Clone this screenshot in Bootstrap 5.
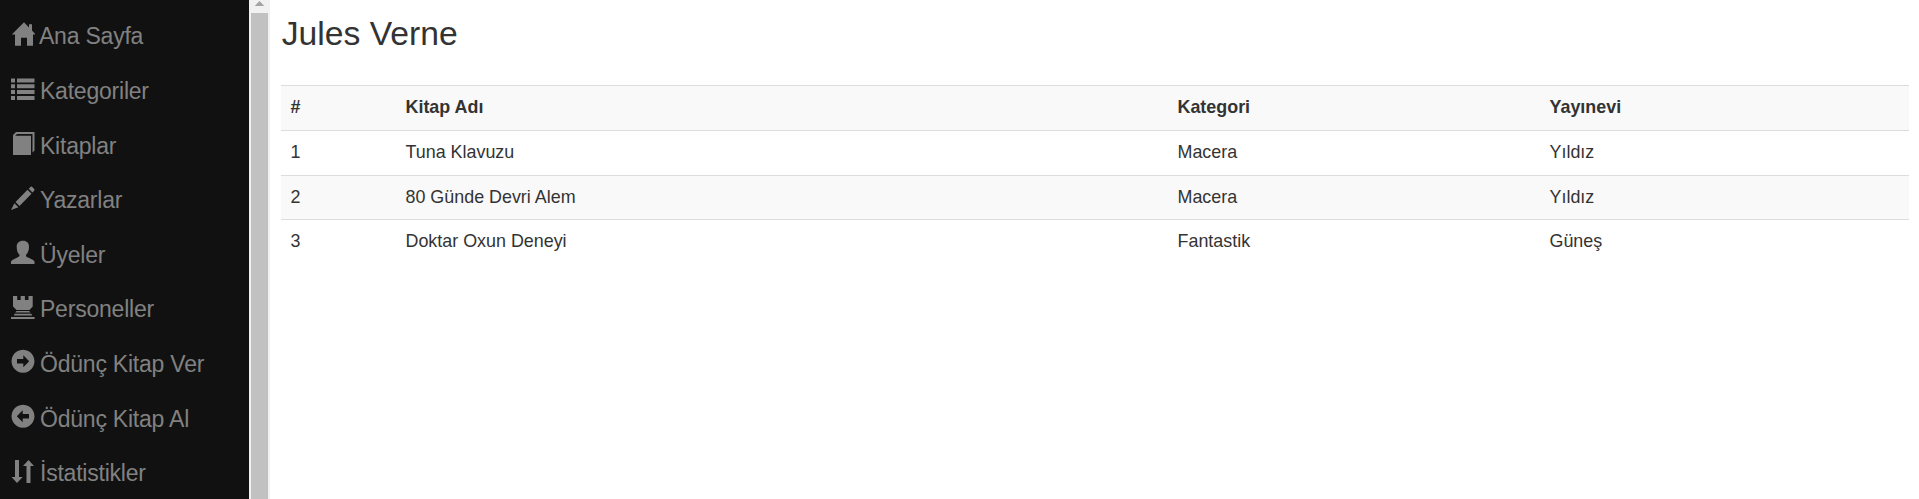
<!DOCTYPE html>
<html lang="tr">
<head>
<meta charset="utf-8">
<title>Jules Verne</title>
<link href="https://cdn.jsdelivr.net/npm/bootstrap@5.3.0/dist/css/bootstrap.min.css" rel="stylesheet">
<style>
body{font-family:"Liberation Sans",Arial,sans-serif;font-size:17.9px;color:#333;background:#fff}
.side{width:249px;background:#111;padding-top:9.4px}
.side .nav-link{height:54.6px;padding:0 0 0 11px;color:#818181;font-size:23px;letter-spacing:-.22px;line-height:55px;white-space:nowrap}
.side .nav-link:hover{color:#f1f1f1}
.side svg{width:24px;height:24px;margin:12.4px 5px 0 0;fill:currentColor}
.side .nav-link:first-child svg{margin-right:4px}
.scroller{width:21px;background:#f1f1f1;padding:0 2px}
.scroller svg{display:block;width:17px;height:13px}
.thumb{background:#c1c1c1}
.page{padding:0 10px 0 11px}
.page h3{font-size:33.7px;font-weight:400;line-height:40px;margin:13px 0 32px .7px}
.books{--bs-table-color:#333;--bs-table-striped-color:#333;--bs-table-striped-bg:#f9f9f9;table-layout:fixed;color:#333}
.books>:not(caption)>*>*{border-width:1px 0 0;border-color:#ddd;padding:0 0 1px 9.5px;height:45px;line-height:43px;white-space:nowrap}
.books>tbody>tr:nth-child(n+3)>*{height:44px;padding-bottom:0}
</style>
</head>
<body>
<div class="d-flex vh-100 overflow-hidden">
<nav class="side nav flex-column flex-nowrap flex-shrink-0">
<a class="nav-link d-flex align-items-start" href="#"><svg viewBox="0 0 24 24"><path d="M13 .3 .8 12.6H4v11.1h6v-8h6v8h6V12.600h2.800L21 8.600V2.300h-3v3.200z"/></svg>Ana Sayfa</a>
<a class="nav-link d-flex align-items-start" href="#"><svg viewBox="0 0 24 24"><path d="M0 2.500h4v4H0zm6 0h17.500v4H6zM0 8.300h4v4H0zm6 0h17.500v4H6zm-6 5.800h4v4H0zm6 0h17.500v4H6zM0 19.900h4v4H0zm6 0h17.500v4H6z"/></svg>Kategoriler</a>
<a class="nav-link d-flex align-items-start" href="#"><svg viewBox="0 0 24 24"><path d="M5 1h18.5v18.5l-2 2V3H6L4.2 4.8H20V24H2V4z"/></svg>Kitaplar</a>
<a class="nav-link d-flex align-items-start" href="#"><svg viewBox="0 0 24 24"><path d="m19.7.7q.8-.5 1.6.2L23.2 3q.8.9 0 1.7L21.5 6.5 17.7 2.7zM16.5 3.8l4 4L8.5 20l-4-4zM3.4 17.2l4 4L0 24z"/></svg>Yazarlar</a>
<a class="nav-link d-flex align-items-start" href="#"><svg viewBox="0 0 24 24"><path d="M12 .8c4 0 6 2.3 6 6.1 0 3-1 6-2.8 7.7-.5 1.6.2 2.2 2 3l4.9 2.3c1.1.6 1.4 1 1.4 2.2V24H0v-1.9c0-1.2.4-1.6 1.4-2.2L6.3 17.6c2-.8 2.5-1.4 2-3C6.6 12.9 5.7 10 5.7 6.9 5.7 3.1 8 .8 12 .8z"/></svg>Üyeler</a>
<a class="nav-link d-flex align-items-start" href="#"><svg viewBox="0 0 24 24"><path d="M2 1h4.200v4h3.500V1h4.200v4h3.600V1h4.200v10.500L18.500 15H5.500L2 11.500zM5.500 16h12.700l1.200 1.600H4.300zM3.600 18.700h16.800l.8 1.700H2.800zM0 22h23.600v2H0z"/></svg>Personeller</a>
<a class="nav-link d-flex align-items-start" href="#"><svg viewBox="0 0 24 24"><path fill-rule="evenodd" d="M12 .8a11.500 11.500 0 1 1-.01 0zM6 10.100v4.300h6.300v3.800l5.900-5.950-5.900-5.950v3.800z"/></svg>Ödünç Kitap Ver</a>
<a class="nav-link d-flex align-items-start" href="#"><svg viewBox="0 0 24 24"><path fill-rule="evenodd" d="M12 .8a11.500 11.500 0 1 1-.01 0zM18 10.100v4.300h-6.300v3.800L5.800 12.250l5.900-5.950v3.800z"/></svg>Ödünç Kitap Al</a>
<a class="nav-link d-flex align-items-start" href="#"><svg viewBox="0 0 24 24"><path d="M4 1h4v17h3.700L6 24 .5 18H4zM17.500 1l5.500 6h-3.500v17h-4V7H12z"/></svg>İstatistikler</a>
</nav>
<div class="scroller d-flex flex-column flex-shrink-0"><svg viewBox="0 0 17 13"><path fill="#a3a3a3" d="m8.500 1 4.800 5H3.700z"/></svg><div class="thumb flex-grow-1"></div></div>
<main class="page flex-grow-1">
<h3>Jules Verne</h3>
<table class="table table-striped books mb-0">
<colgroup><col style="width:115px"><col style="width:772px"><col style="width:372px"><col></colgroup>
<tbody>
<tr><th>#</th><th>Kitap Adı</th><th>Kategori</th><th>Yayınevi</th></tr>
<tr><td>1</td><td>Tuna Klavuzu</td><td>Macera</td><td>Yıldız</td></tr>
<tr><td>2</td><td>80 Günde Devri Alem</td><td>Macera</td><td>Yıldız</td></tr>
<tr><td>3</td><td>Doktar Oxun Deneyi</td><td>Fantastik</td><td>Güneş</td></tr>
</tbody>
</table>
</main>
</div>
<script src="https://cdn.jsdelivr.net/npm/bootstrap@5.3.0/dist/js/bootstrap.bundle.min.js"></script>
</body>
</html>
